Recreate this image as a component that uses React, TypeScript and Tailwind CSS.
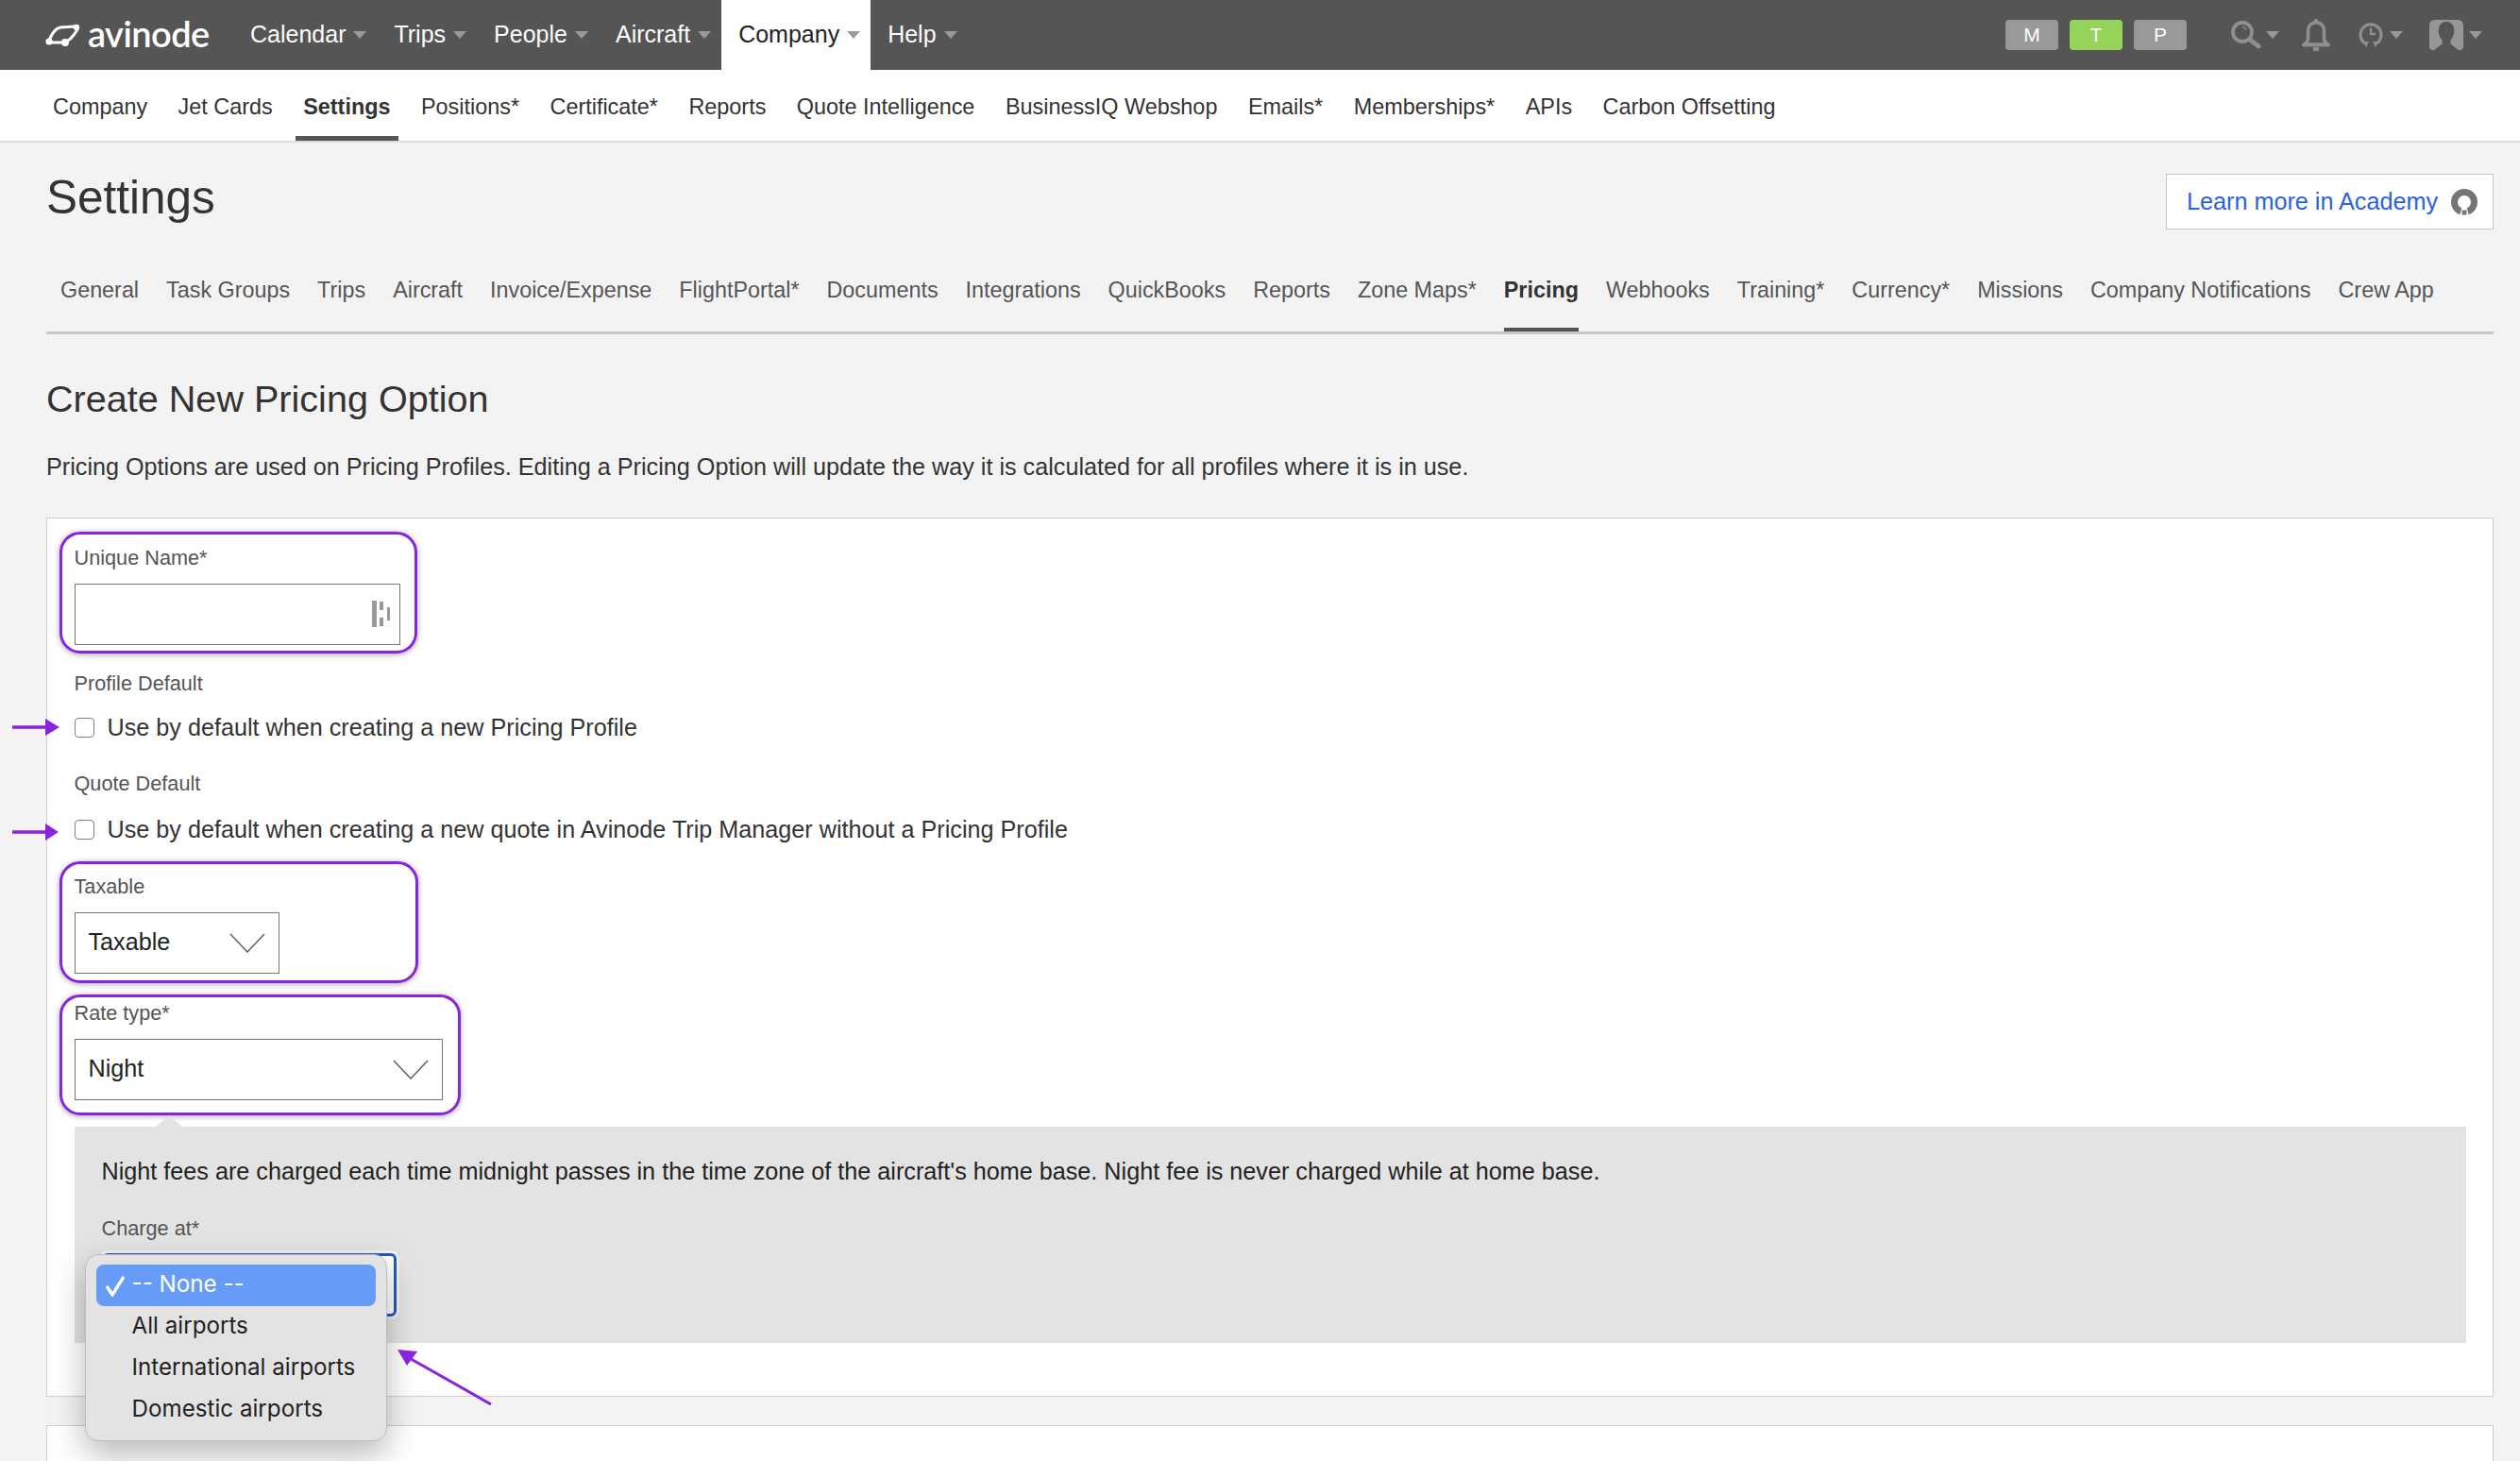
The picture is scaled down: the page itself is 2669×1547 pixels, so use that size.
import React from "react";

function Caret({ color = "border-t-[#999]" }: { color?: string }) {
  return <span className={"inline-block w-0 h-0 border-x-[7px] border-x-transparent border-t-[8px] " + color} />;
}

function TopItem({ label, active }: { label: string; active?: boolean }) {
  return (
    <a className={"flex items-center h-full pl-[18px] pr-[11px] gap-[8px] text-[25px] " + (active ? "bg-white text-[#222]" : "text-white")}>
      {label}
      <Caret />
    </a>
  );
}

function Logo() {
  return (
    <div className="flex items-center w-[199px] pl-[48px] gap-[7px]">
      <svg width="38" height="24" viewBox="0 0 38 24" fill="none" className="shrink-0">
        <path d="M4 18 C7 10 11 5 16 4 L32 3 C35 3 34 6 33 8 C29 14 26 18 20 20 L4 20" stroke="#fff" strokeWidth="3" />
        <circle cx="4" cy="19" r="3.6" fill="#fff" />
        <circle cx="21" cy="20" r="4" fill="#fff" />
        <circle cx="33" cy="4" r="3.2" fill="#fff" />
      </svg>
      <span className="font-['Lato',sans-serif] font-semibold text-[38px] leading-none text-white tracking-[-0.55px] -mt-[4px]">avinode</span>
    </div>
  );
}

function RightIcons() {
  return (
    <div className="flex items-center ml-auto pr-[40px]">
      <div className="flex gap-[12px] mr-[47px]">
        <span className="w-[56px] h-[32px] rounded-[4px] bg-[#999] text-white text-[21px] flex items-center justify-center">M</span>
        <span className="w-[56px] h-[32px] rounded-[4px] bg-[#96d35a] text-white text-[21px] flex items-center justify-center">T</span>
        <span className="w-[56px] h-[32px] rounded-[4px] bg-[#999] text-white text-[21px] flex items-center justify-center">P</span>
      </div>
      <svg width="32" height="30" viewBox="0 0 32 30" fill="none">
        <circle cx="12" cy="12" r="10" stroke="#8f8f8f" strokeWidth="3.8" />
        <path d="M19.5 19.5 L29 27" stroke="#8f8f8f" strokeWidth="4.8" strokeLinecap="round" />
        <path d="M12 6 A6 6 0 0 1 16 10" stroke="#8f8f8f" strokeWidth="1.4" />
      </svg>
      <span className="ml-[5px] flex"><Caret /></span>
      <svg width="30" height="34" viewBox="0 0 30 34" fill="none" className="ml-[24px]">
        <path d="M15 4 C9 4 6.5 8 6.5 13 V21 C6.5 24 4 26 2.5 27 H27.5 C26 26 23.5 24 23.5 21 V13 C23.5 8 21 4 15 4 Z" stroke="#8f8f8f" strokeWidth="3.4" />
        <path d="M1 28 H29" stroke="#8f8f8f" strokeWidth="2.8" />
        <circle cx="15" cy="2.5" r="2.4" fill="#8f8f8f" />
        <rect x="12" y="30" width="6" height="4" fill="#8f8f8f" />
      </svg>
      <svg width="26" height="28" viewBox="0 0 26 28" fill="none" className="ml-[30px]">
        <path d="M7 23 A11 11 0 1 1 19 23" stroke="#8f8f8f" strokeWidth="3.2" />
        <path d="M13 6.5 V13 H18" stroke="#8f8f8f" strokeWidth="2.4" />
        <path d="M5 21 L11 21 L8 27 Z M15 21 L21 21 L18 27 Z" fill="#8f8f8f" />
      </svg>
      <span className="ml-[7px] flex"><Caret /></span>
      <svg width="36" height="33" viewBox="0 0 36 33" className="ml-[28px]">
        <path fillRule="evenodd" fill="#969696" d="M6 0 H30 C33 0 36 2 36 6 V28 C36 31 33 33 31 32 C28 30 26 28 23 26 C22 25 22 23 23 21 C26 17 27 13 26 9 C25 4 22 2 18 2 C14 2 11 4 10 9 C9 13 10 17 13 21 C14 23 14 25 13 26 C10 28 8 30 5 32 C3 33 0 31 0 28 V6 C0 2 3 0 6 0 Z" />
      </svg>
      <span className="ml-[6px] flex"><Caret /></span>
    </div>
  );
}

function SubItem({ label, active }: { label: string; active?: boolean }) {
  return (
    <a className={"flex items-center h-full px-[8px] pt-[9px] text-[23.4px] border-b-[5px] " + (active ? "font-bold text-[#333] border-[#555]" : "text-[#333] border-transparent")}>
      {label}
    </a>
  );
}

function Tab({ label, active }: { label: string; active?: boolean }) {
  return (
    <a className={"block h-[62px] leading-[36px] text-[23.35px] border-b-[4px] " + (active ? "font-bold text-[#333] border-[#555]" : "text-[#555] border-transparent")}>
      {label}
    </a>
  );
}

function Chevron() {
  return (
    <svg width="38" height="21" viewBox="0 0 38 21" fill="none" className="shrink-0">
      <path d="M1 1 L19 20 L37 1" stroke="#666" strokeWidth="1.6" />
    </svg>
  );
}

function Select({ value, w }: { value: string; w: string }) {
  return (
    <div className={"flex items-center justify-between h-[65px] border-[1.5px] border-[#777] bg-white pl-[14px] pr-[14px] text-[25.2px] text-[#222] " + w}>
      {value}
      <Chevron />
    </div>
  );
}

function Label({ children }: { children: React.ReactNode }) {
  return <div className="h-[30px] leading-[30px] text-[21.7px] text-[#555]">{children}</div>;
}

function Check({ label }: { label: string }) {
  return (
    <label className="flex items-center h-[34px] gap-[14px] text-[25.2px] text-[#333]">
      <span className="w-[21px] h-[21px] rounded-[4px] border-[1.5px] border-[#808080] bg-white" />
      {label}
    </label>
  );
}

const sub = ["Company", "Jet Cards", "Settings", "Positions*", "Certificate*", "Reports", "Quote Intelligence", "BusinessIQ Webshop", "Emails*", "Memberships*", "APIs", "Carbon Offsetting"];
const tabs = ["General", "Task Groups", "Trips", "Aircraft", "Invoice/Expense", "FlightPortal*", "Documents", "Integrations", "QuickBooks", "Reports", "Zone Maps*", "Pricing", "Webhooks", "Training*", "Currency*", "Missions", "Company Notifications", "Crew App"];

const box = "border-[3px] border-[#8a24dc] rounded-[22px] shadow-[0_1px_6px_rgba(0,0,0,0.35)] bg-white pl-[13px]";

export default function App() {
  return (
    <div className="relative w-[2669px] h-[1547px] overflow-hidden bg-[#f3f3f3] font-['Liberation_Sans',Arial,sans-serif]">
      <header className="flex items-center h-[74px] bg-[#555]">
        <Logo />
        <nav className="flex h-full ml-[48px]">
          {["Calendar", "Trips", "People", "Aircraft"].map((l) => <TopItem key={l} label={l} />)}
          <TopItem label="Company" active />
          <TopItem label="Help" />
        </nav>
        <RightIcons />
      </header>

      <nav className="flex gap-[16.5px] h-[77px] pl-[48px] bg-white border-b-[2px] border-[#dcdcdc]">
        {sub.map((l) => <SubItem key={l} label={l} active={l === "Settings"} />)}
      </nav>

      <main className="pl-[49px] pr-[28px]">
        <div className="flex items-start justify-between pt-[33px]">
          <h1 className="text-[49.5px] leading-[50px] text-[#333]">Settings</h1>
          <a className="flex items-center w-[347px] h-[59px] pl-[21px] gap-[14px] bg-white border-[1.5px] border-[#c8c8c8] text-[25.2px] text-[#2a62d8] whitespace-nowrap">
            Learn more in Academy
            <svg width="28" height="28" viewBox="0 0 28 28" fill="none">
              <circle cx="14" cy="14" r="10.5" stroke="#757575" strokeWidth="7" />
              <path d="M9 28 L19 28 L16.5 20 L11.5 20 Z" fill="#fff" />
              <rect x="11.5" y="22.5" width="5" height="5" fill="#757575" />
            </svg>
          </a>
        </div>

        <nav className="flex gap-[29px] mt-[46px] h-[65px] pl-[15px] border-b-[3px] border-[#c8c8c8]">
          {tabs.map((l) => <Tab key={l} label={l} active={l === "Pricing"} />)}
        </nav>

        <h2 className="mt-[45px] text-[39.6px] leading-[46px] text-[#333]">Create New Pricing Option</h2>
        <p className="mt-[32px] text-[25.2px] leading-[34px] text-[#333]">
          Pricing Options are used on Pricing Profiles. Editing a Pricing Option will update the way it is calculated for all profiles where it is in use.
        </p>

        <section className="mt-[37px] h-[931px] bg-white border-[1.5px] border-[#cfcfcf] pt-[13.5px] pl-[12.5px] pr-[28px]">
          <div className={box + " w-[379px] h-[129px] pt-[10px]"}>
            <Label>Unique Name*</Label>
            <div className="flex items-center justify-end w-[345px] h-[65px] mt-[12px] pr-[9px] border-[1.5px] border-[#777] bg-white">
              <svg width="20" height="30" viewBox="0 0 20 30" fill="#999">
                <rect x="0" y="1" width="5" height="28" />
                <rect x="8" y="2" width="4" height="9" />
                <rect x="8" y="19" width="4" height="9" />
                <rect x="16" y="8" width="3" height="14" />
              </svg>
            </div>
          </div>

          <div className="ml-[16px]">
            <div className="mt-[17px]"><Label>Profile Default</Label></div>
            <div className="mt-[15px]"><Check label="Use by default when creating a new Pricing Profile" /></div>
            <div className="mt-[27px]"><Label>Quote Default</Label></div>
            <div className="mt-[17px]"><Check label="Use by default when creating a new quote in Avinode Trip Manager without a Pricing Profile" /></div>
          </div>

          <div className={box + " mt-[16px] w-[380px] h-[129px] pt-[9px]"}>
            <Label>Taxable</Label>
            <div className="mt-[12px]"><Select value="Taxable" w="w-[217px]" /></div>
          </div>

          <div className={box + " mt-[12px] w-[425px] h-[128px] pt-[2px]"}>
            <Label>Rate type*</Label>
            <div className="mt-[12px]"><Select value="Night" w="w-[390px]" /></div>
          </div>

          <div className="relative ml-[16px] mt-[12px] h-[229px] bg-[#e3e3e3] pl-[29px] pt-[30px] before:content-[''] before:absolute before:left-[86px] before:-top-[12px] before:w-0 before:h-0 before:border-x-[14px] before:border-x-transparent before:border-b-[12px] before:border-b-[#e3e3e3]">
            <p className="text-[25.2px] leading-[34px] text-[#222]">
              Night fees are charged each time midnight passes in the time zone of the aircraft's home base. Night fee is never charged while at home base.
            </p>
            <div className="mt-[29px]"><Label>Charge at*</Label></div>
            <div className="relative mt-[11px] w-[312px] h-[67px] bg-white border-[3px] border-[#2459c0] rounded-[6px] shadow-[0_0_0_3px_#f0f2f8]">
              <div className="absolute z-10 -left-[21px] -top-[2px] w-[320px] h-[198px] rounded-[14px] border border-[#bdbdbd] bg-[#e3e3e3] shadow-[0_14px_34px_rgba(0,0,0,0.28)] px-[11px] pt-[10px] font-['Inter',sans-serif] text-[24.2px] text-[#222]">
                <div className="flex items-center h-[44px] rounded-[8px] bg-[#669cf7] text-white">
                  <svg width="38" height="24" viewBox="0 0 38 24" fill="none" className="shrink-0">
                    <path d="M11 13 L17 22 L29 3" stroke="#fff" strokeWidth="3.4" />
                  </svg>
                  -- None --
                </div>
                <div className="h-[44px] leading-[41px] pl-[38px]">All airports</div>
                <div className="h-[44px] leading-[41px] pl-[38px]">International airports</div>
                <div className="h-[44px] leading-[41px] pl-[38px]">Domestic airports</div>
              </div>
            </div>
          </div>
        </section>

        <section className="mt-[30px] h-[100px] bg-white border-[1.5px] border-[#cfcfcf] pt-[31px] pl-[31px]">
          <h3 className="text-[39.6px] leading-[46px] text-[#555]">The Conditions and Customisation</h3>
        </section>
      </main>

      <svg className="absolute z-20 left-0 top-0 pointer-events-none" width="540" height="1547" viewBox="0 0 540 1547" fill="none">
        <path d="M13 770 H50" stroke="#8a24dc" strokeWidth="3.4" />
        <path d="M48 761 L63 770 L48 779 Z" fill="#8a24dc" />
        <path d="M13 881 H50" stroke="#8a24dc" strokeWidth="3.4" />
        <path d="M48 872 L62 881 L48 890 Z" fill="#8a24dc" />
        <path d="M520 1487 L430 1436" stroke="#8a24dc" strokeWidth="3" />
        <path d="M421 1429 L442 1431 L431 1446 Z" fill="#8a24dc" />
      </svg>
    </div>
  );
}
